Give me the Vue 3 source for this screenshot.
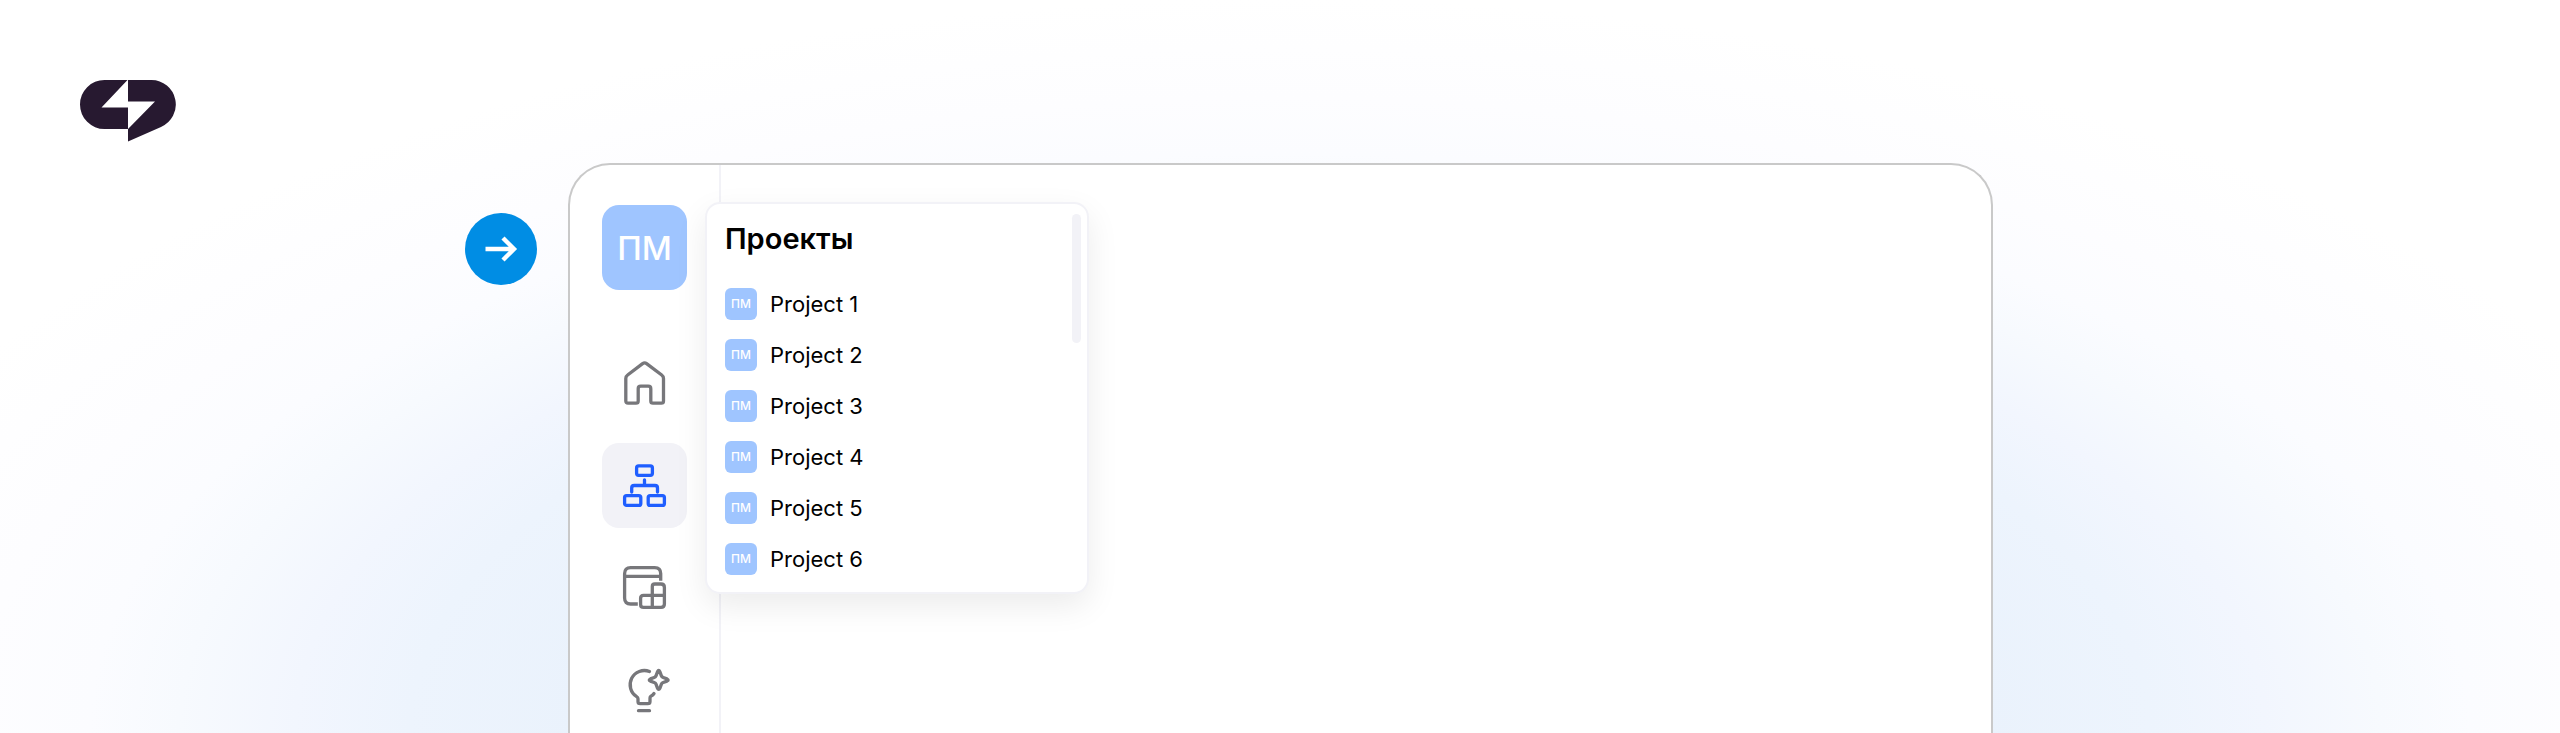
<script setup>
const projects = [1, 2, 3, 4, 5, 6].map((n) => ({ id: n, name: `Project ${n}` }))
</script>

<template>
  <main class="page">
    <svg class="logo" viewBox="0 0 96 62" role="img" aria-label="Logo">
      <path fill="#271930" d="M24.500 0H47.500L21.500 27.500H48V49H24.500A24.500 24.500 0 0 1 24.500 0Z" />
      <path fill="#271930" d="M48 0H71.500A24.500 24.500 0 0 1 81 47L48 61.500V49L75 21.500H48Z" />
    </svg>

    <div class="stage">
      <button class="next" type="button" aria-label="Next">
        <svg viewBox="0 0 72 72" fill="none" stroke="#fff" stroke-width="4.400">
          <path d="M20.500 36H48M38 25L49 36L38 47" />
        </svg>
      </button>

      <section class="window">
        <nav class="sidebar">
          <button class="avatar" type="button">ПМ</button>

          <a class="item" href="#home" aria-label="Home">
            <svg viewBox="0 0 47 47">
              <path d="M4.800 18.500Q4.800 16.300 6.600 15L21.600 3.600Q23.600 2.200 25.600 3.600L40.700 15Q42.500 16.300 42.500 18.500V41Q42.500 43.200 40.300 43.200H32Q29.800 43.200 29.800 41V28.700Q29.800 26.200 27.300 26.200H19.700Q17.200 26.200 17.200 28.700V41Q17.200 43.200 15 43.200H7Q4.800 43.200 4.800 41Z" />
            </svg>
          </a>
          <a class="item active" href="#structure" aria-label="Structure">
            <svg viewBox="0 0 47 47">
              <rect x="15.600" y="3.900" width="15.800" height="9.400" rx="2" />
              <rect x="3.600" y="33.600" width="16.200" height="9.800" rx="2" />
              <rect x="27.200" y="33.600" width="16.200" height="9.800" rx="2" />
              <path d="M23.500 18V23.500M10.700 30V26Q10.700 23.500 13.200 23.500H34Q36.500 23.500 36.500 26V30" />
            </svg>
          </a>
          <a class="item" href="#apps" aria-label="Apps">
            <svg viewBox="0 0 47 47">
              <path class="butt" d="M16.800 40H9.600Q3.600 40 3.600 34V9.600Q3.600 3.600 9.600 3.600H33.700Q39.700 3.600 39.700 9.600V16.800M3.600 12.400H39.700" />
              <path d="M31.300 31.300V22.500Q31.300 20 33.800 20H40Q43.400 20 43.400 23.400V40Q43.400 43.400 40 43.400H22.600Q19.600 43.400 19.600 40.400V34.300Q19.600 31.300 22.600 31.300H43.400M31.300 31.300V43.400" />
            </svg>
          </a>
          <a class="item" href="#ideas" aria-label="Ideas">
            <svg viewBox="0 0 47 47">
              <path d="M28.500 5.500A14.200 14.200 0 0 0 15.700 30.700Q17 31.300 17 32.800V35.500Q17 37.700 19.200 37.700H26.800Q29 37.700 29 35.500V32Q29 30.800 30 30.200Q32 29 33 27.500M17.500 44.700H28.500" />
              <path d="M36.500 5.700Q37.700 3.300 38.900 5.700L40.300 9.600Q40.800 11 42.200 11.500L46 12.900Q48.300 14 46 15.100L42.200 16.500Q40.800 17 40.300 18.400L38.900 22.200Q37.700 24.600 36.500 22.200L35.100 18.400Q34.600 17 33.200 16.500L29.400 15.100Q27.100 14 29.400 12.900L33.200 11.500Q34.600 11 35.100 9.600Z" />
            </svg>
          </a>
        </nav>

        <div class="content">
          <section class="popover">
            <h1>Проекты</h1>
            <ul>
              <li v-for="p in projects" :key="p.id">
                <a :href="`#project-${p.id}`">
                  <span class="badge">ПМ</span>
                  <span>{{ p.name }}</span>
                </a>
              </li>
            </ul>
            <span class="thumb"></span>
          </section>
        </div>
      </section>
    </div>
  </main>
</template>

<style>
body {
  margin: 0;
}
</style>

<style scoped>
.page {
  box-sizing: border-box;
  height: 100vh;
  overflow: hidden;
  display: flex;
  flex-direction: column;
  padding-top: 80px;
  font-family: Inter, "Liberation Sans", sans-serif;
  color: #000;
  background: radial-gradient(
    ellipse 50% 85% at 50% 100%,
    #e8f1fc 0%,
    #eaf2fc 55%,
    #edf4fd 68%,
    #f2f6fe 77%,
    #f7fafe 86%,
    #fbfcff 93%,
    #fdfdff 102%,
    #fff 118%
  );
}

.logo {
  flex: none;
  width: 96px;
  height: 62px;
  margin-left: 80px;
}

.stage {
  flex: 1;
  display: flex;
  align-items: flex-start;
  min-height: 0;
  margin-top: 21px;
  padding: 0 567px 0 465px;
}

.next {
  flex: none;
  width: 72px;
  height: 72px;
  margin: 50px 31px 0 0;
  padding: 0;
  border: 0;
  border-radius: 50%;
  background: #008de4;
}

.next svg {
  display: block;
}

.window {
  box-sizing: border-box;
  flex: 1;
  display: flex;
  height: 100%;
  border: 2px solid #c9c9c9;
  border-bottom: 0;
  border-radius: 42px 42px 0 0;
  background: #fff;
}

.sidebar {
  box-sizing: border-box;
  flex: none;
  display: flex;
  flex-direction: column;
  align-items: center;
  gap: 17px;
  width: 151px;
  padding-top: 40px;
  border-right: 2px solid #f2f2f7;
}

.avatar,
.item {
  flex: none;
  display: grid;
  place-items: center;
  width: 85px;
  height: 85px;
  border-radius: 17px;
}

.avatar {
  margin-bottom: 34px;
  padding: 0;
  border: 0;
  background: #9fc5ff;
  color: #fff;
  font: 500 33px/40px Inter, "Liberation Sans", sans-serif;
}

.item svg {
  width: 47px;
  height: 47px;
  overflow: visible;
  fill: none;
  stroke: #77777b;
  stroke-width: 3.3;
  stroke-linecap: round;
  stroke-linejoin: round;
}

.item .butt {
  stroke-linecap: butt;
}

.item.active {
  background: #f2f2f7;
}

.item.active svg {
  stroke: #1f5eff;
}

.content {
  flex: 1;
}

.popover {
  position: relative;
  box-sizing: border-box;
  width: 384px;
  margin: 37px 0 0 -16px;
  padding: 17px 18px;
  border: 2px solid #f2f2f7;
  border-radius: 15px;
  background: #fff;
  box-shadow: 0 12px 32px rgba(0, 0, 0, 0.08);
}

h1 {
  margin: 0 0 31px;
  font-size: 29px;
  font-weight: 600;
  line-height: 36px;
}

ul {
  display: grid;
  gap: 19px;
  margin: 0;
  padding: 0;
  list-style: none;
}

li a {
  display: flex;
  align-items: center;
  gap: 13px;
  color: #000;
  font-size: 22px;
  line-height: 32px;
  text-decoration: none;
}

.badge {
  width: 32px;
  height: 32px;
  border-radius: 6px;
  background: #9fc5ff;
  color: #fff;
  font-size: 12px;
  font-weight: 500;
  text-align: center;
}

.thumb {
  position: absolute;
  top: 10px;
  right: 6px;
  width: 9px;
  height: 129px;
  border-radius: 5px;
  background: #f2f2f7;
}
</style>
